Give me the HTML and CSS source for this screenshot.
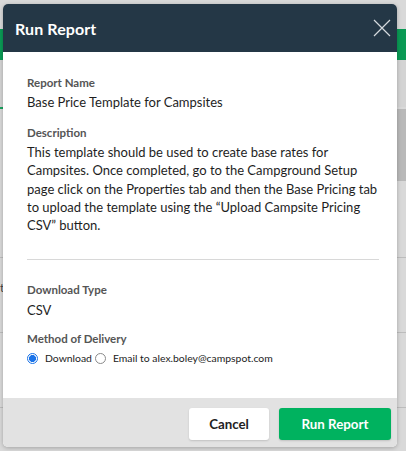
FILE: index.html
```html
<!DOCTYPE html>
<html>
<head>
<meta charset="utf-8">
<link rel="stylesheet" href="styles.css">
</head>
<body>
<div class="page">
  <div class="gap-top"></div>
  <div class="greenbar"></div>
  <div class="tabs"></div>
  <div class="tabline"></div>
  <div class="row r1"><span class="thumb"></span></div>
  <div class="row r2"><span class="bgtext">t</span></div>
  <div class="row r3"></div>
  <div class="bottomtext">ll page click on the Properties tab and then the</div>
</div>

<div class="modal">
  <div class="header">
    <h1 class="title">Run Report</h1>
    <svg class="close" width="18" height="18" viewBox="0 0 18 18"><path d="M1 1 L17 17 M17 1 L1 17" stroke="#d4d9dd" stroke-width="1.2" fill="none"/></svg>
  </div>
  <div class="body">
    <div class="field">
      <div class="label">Report Name</div>
      <div class="value">Base Price Template for Campsites</div>
    </div>
    <div class="field">
      <div class="label">Description</div>
      <div class="value desc">This template should be used to create base rates for<br>Campsites. Once completed, go to the Campground Setup<br>page click on the Properties tab and then the Base Pricing tab<br>to upload the template using the “Upload Campsite Pricing<br>CSV” button.</div>
    </div>
    <hr class="divider">
    <div class="field">
      <div class="label">Download Type</div>
      <div class="value csv">CSV</div>
    </div>
    <div class="field">
      <div class="label">Method of Delivery</div>
      <div class="radios">
        <label class="radio"><span class="dot on"></span><span>Download</span></label>
        <label class="radio"><span class="dot"></span><span>Email to alex.boley@campspot.com</span></label>
      </div>
    </div>
  </div>
  <div class="footer">
    <button class="btn cancel">Cancel</button>
    <button class="btn run">Run Report</button>
  </div>
</div>
</body>
</html>
```

FILE: styles.css
```css
* { box-sizing: border-box; }
html, body { margin: 0; padding: 0; overflow: hidden; }
body {
  width: 406px;
  height: 451px;
  background: #d9d9d9;
  font-family: Lato, "Liberation Sans", sans-serif;
  position: relative;
}
.page { display: flex; flex-direction: column; height: 451px; overflow: hidden; }
.gap-top { height: 29px; flex-shrink: 0; }
.greenbar { height: 31px; background: #0a9a55; flex-shrink: 0; }
.tabs { height: 47px; background: #d4d4d4; flex-shrink: 0; }
.tabline { height: 2px; background: #19a35f; width: 40px; flex-shrink: 0; }
.row { height: 75px; border-bottom: 1px solid #bdbdbd; position: relative; flex-shrink: 0; }
.r1 { height: 149px; }
.thumb { position: absolute; right: 0; top: 0; width: 9px; height: 72px; background: #b9b9b9; }
.bgtext { position: absolute; left: 0; top: 22px; font-size: 12px; color: #444; }
.bottomtext { font-size: 11px; line-height: 12px; color: #555; padding-left: 6px; margin-top: 8px; white-space: nowrap; flex-shrink: 0; }

.modal {
  position: absolute;
  left: 3px;
  top: 4px;
  width: 394px;
  height: 443px;
  background: #fff;
  border-radius: 5px;
  overflow: hidden;
  display: flex;
  flex-direction: column;
  box-shadow: 0 1px 4px rgba(0,0,0,0.25);
}
.header {
  height: 48px;
  background: #243746;
  display: flex;
  align-items: center;
  justify-content: space-between;
  padding: 0 6px 0 12px;
  flex-shrink: 0;
}
.title {
  margin: 0;
  color: #fff;
  font-size: 16px;
  font-weight: 700;
  letter-spacing: 0.1px;
}
.close { display: block; }
.body {
  flex: 1;
  padding: 24px 18px 0 24px;
}
.field { margin-bottom: 15px; }
.label {
  font-size: 11.5px;
  font-weight: 700;
  color: #555;
  line-height: 14px;
  margin-bottom: 3px;
}
.value {
  font-size: 13px;
  color: #1e1e1e;
  line-height: 18px;
  white-space: nowrap;
}
.desc { line-height: 18.3px; }
.csv { margin-top: 4px; margin-bottom: -2px; }
.divider {
  border: none;
  border-top: 1px solid #d8d8d8;
  margin: 25px 0 23px 0;
}
.radios { display: flex; align-items: center; gap: 3px; font-size: 10.4px; color: #222; margin-top: 5px; height: 14px; }
.radio { display: flex; align-items: center; gap: 7px; }
.dot {
  width: 11px; height: 11px; border-radius: 50%;
  border: 1px solid #8a8a8a; background: #fff; display: inline-block;
  box-sizing: border-box;
}
.dot.on {
  border: 1px solid #1a73e8;
  background: radial-gradient(circle, #1a73e8 0 3.2px, #fff 3.8px);
}
.footer {
  height: 49px;
  background: #e2e2e2;
  display: flex;
  justify-content: flex-end;
  align-items: flex-start;
  gap: 10px;
  padding: 10px 6px 0 0;
  flex-shrink: 0;
}
.btn {
  height: 32px;
  border: none;
  border-radius: 3px;
  font-family: inherit;
  font-size: 13.3px;
  font-weight: 700;
  cursor: pointer;
}
.cancel { width: 80px; background: #fff; color: #222; box-shadow: 0 1px 2px rgba(0,0,0,0.15); }
.run { width: 112px; background: #00b25f; color: #fff; box-shadow: 0 1px 2px rgba(0,0,0,0.15); }
```
